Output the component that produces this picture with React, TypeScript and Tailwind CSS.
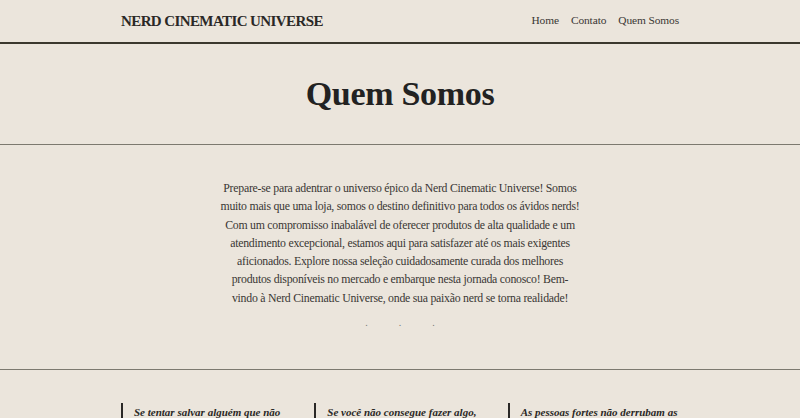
import React from "react";

const serif = { fontFamily: '"Liberation Serif", "DejaVu Serif", serif' };

export default function App() {
  const quotes = [
    "Se tentar salvar alguém que não quer ser salvo, vai acabar se afogando junto.",
    "Se você não consegue fazer algo, não deixe que ninguém diga que você consegue.",
    "As pessoas fortes não derrubam as outras, elas as ajudam a se levantar.",
  ];
  return (
    <div className="min-h-[418px] bg-[#ebe5dc] text-[#2a2826]" style={serif}>
      <header className="border-b-2 border-[#3b382e]">
        <div className="mx-auto flex h-[42px] w-[558px] items-center justify-between">
          <div className="text-[15px] font-bold tracking-[-0.6px] text-[#2a2826]">NERD CINEMATIC UNIVERSE</div>
          <nav className="flex gap-[12px] text-[11.4px] tracking-[-0.1px] text-[#3a3734]">
            <span>Home</span>
            <span>Contato</span>
            <span>Quem Somos</span>
          </nav>
        </div>
      </header>
      <section className="flex h-[101px] items-center justify-center border-b border-[#7c796f]">
        <h1 className="text-[34px] font-bold leading-none tracking-[-0.3px] text-[#222]">Quem Somos</h1>
      </section>
      <section className="flex flex-col items-center border-b border-[#7c796f] pt-[34px] pb-[41px]">
        <p className="w-[366px] text-center text-[11.8px] leading-[18.3px] tracking-[-0.25px] text-[#3a3734]">
          Prepare-se para adentrar o universo épico da Nerd Cinematic Universe! Somos muito mais que uma loja, somos o destino definitivo para todos os ávidos nerds! Com um compromisso inabalável de oferecer produtos de alta qualidade e um atendimento excepcional, estamos aqui para satisfazer até os mais exigentes aficionados. Explore nossa seleção cuidadosamente curada dos melhores produtos disponíveis no mercado e embarque nesta jornada conosco! Bem-
          <br />
          vindo à Nerd Cinematic Universe, onde sua paixão nerd se torna realidade!
        </p>
        <div className="mt-[11px] flex gap-[31px] text-[10px] leading-none text-[#777]">
          <span>.</span>
          <span>.</span>
          <span>.</span>
        </div>
      </section>
      <section className="mx-auto mt-[33px] grid w-[558px] grid-cols-3 gap-[22px]">
        {quotes.map((q) => (
          <div key={q} className="border-l-2 border-[#2a2826] pl-[11px]">
            <p className="text-[11px] font-bold italic leading-[18px] text-[#2a2826]">{q}</p>
          </div>
        ))}
      </section>
    </div>
  );
}
